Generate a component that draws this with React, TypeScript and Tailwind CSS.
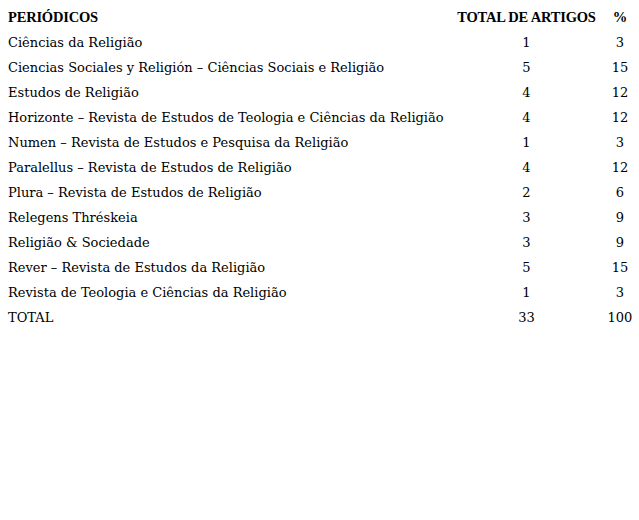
import React from 'react'

const rows: [string, string, string][] = [
  ['Ciências da Religião', '1', '3'],
  ['Ciencias Sociales y Religión – Ciências Sociais e Religião', '5', '15'],
  ['Estudos de Religião', '4', '12'],
  ['Horizonte – Revista de Estudos de Teologia e Ciências da Religião', '4', '12'],
  ['Numen – Revista de Estudos e Pesquisa da Religião', '1', '3'],
  ['Paralellus – Revista de Estudos de Religião', '4', '12'],
  ['Plura – Revista de Estudos de Religião', '2', '6'],
  ['Relegens Thréskeia', '3', '9'],
  ['Religião & Sociedade', '3', '9'],
  ['Rever – Revista de Estudos da Religião', '5', '15'],
  ['Revista de Teologia e Ciências da Religião', '1', '3'],
  ['TOTAL', '33', '100'],
]

export default function App() {
  return (
    <div className="w-[639px] h-[520px] bg-white pt-[5px] pl-[4px]">
      <table className="border-collapse text-black">
        <thead>
          <tr className="h-[25px] font-['Liberation_Serif',serif] font-bold text-[14.5px]">
            <th className="w-[445px] text-left pl-[4px] tracking-[-0.2px]">PERIÓDICOS</th>
            <th className="w-[155px] text-center tracking-[-0.2px]">TOTAL DE ARTIGOS</th>
            <th className="w-[32px] text-center">%</th>
          </tr>
        </thead>
        <tbody className="font-['DejaVu_Serif',serif] font-light text-[13px]">
          {rows.map(([name, total, pct]) => (
            <tr key={name} className="h-[25px]">
              <td className="pl-[4px] whitespace-nowrap">{name}</td>
              <td className="text-center">{total}</td>
              <td className="text-center">{pct}</td>
            </tr>
          ))}
        </tbody>
      </table>
    </div>
  )
}
